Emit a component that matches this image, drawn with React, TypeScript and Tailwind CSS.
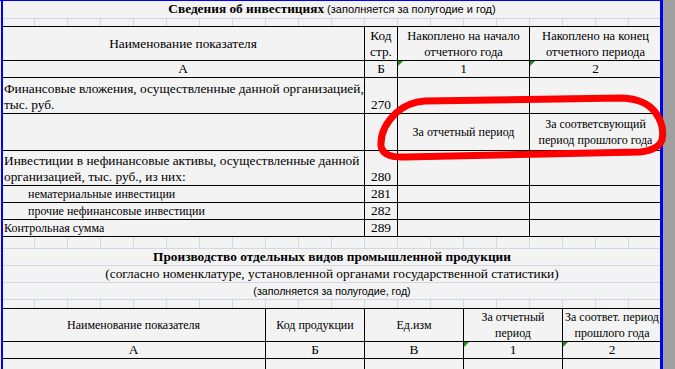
import React from "react";

const serif = "font-['Liberation_Serif',serif]";
const sans = "font-['Liberation_Sans',sans-serif]";

function GridRow({ h, bottom = false }: { h: string; bottom?: boolean }) {
  return (
    <div className={`flex ${h} ${bottom ? "border-b border-[#d0d7e5]" : ""}`}>
      {Array.from({ length: 20 }).map((_, i) => (
        <div key={i} className="w-[33px] shrink-0 border-r border-[#d0d7e5]" />
      ))}
    </div>
  );
}

function Tri() {
  return (
    <span className="absolute left-0 top-0 w-0 h-0 border-t-[5px] border-r-[5px] border-t-[#1a8a1a] border-r-transparent" />
  );
}

const c = "border-r border-b border-black flex";

export default function App() {
  return (
    <div className={`relative w-[675px] h-[369px] overflow-hidden bg-[#a0a0a0] flex ${serif} text-black`}>
      <div className="w-[663px] h-full shrink-0 bg-[#f3f3f3] pl-[2px]">
        <div className="w-[660px] flex flex-col">
          {/* Title row */}
          <div className="h-[19px] border-b border-[#d0d7e5] flex items-center justify-center leading-[16px]">
            <span className="text-[13.33px] font-bold">Сведения об инвестициях</span>
            <span className={`${sans} text-[11px] ml-[3px]`}>(заполняется за полугодие и год)</span>
          </div>
          <GridRow h="h-[7px]" />

          {/* Table 1 */}
          <div className="grid grid-cols-[363px_33px_132px_132px] border-t border-black text-[13.33px] leading-[16px]">
            <div className={`${c} h-[34px] items-center justify-center`}>Наименование показателя</div>
            <div className={`${c} items-center justify-center text-center`}>Код<br />стр.</div>
            <div className={`${c} items-center justify-center text-center text-[12.5px]`}>Накоплено на начало<br />отчетного года</div>
            <div className={`${c} items-center justify-center text-center text-[12.5px]`}>Накоплено на конец<br />отчетного периода</div>

            <div className={`${c} h-[17px] items-center justify-center`}>А</div>
            <div className={`${c} items-center justify-center`}>Б</div>
            <div className={`${c} relative items-center justify-center`}><Tri />1</div>
            <div className={`${c} relative items-center justify-center`}><Tri />2</div>

            <div className={`${c} h-[36px] items-end pl-[2px]`}>Финансовые вложения, осуществленные данной организацией,<br />тыс. руб.</div>
            <div className={`${c} items-end justify-center`}>270</div>
            <div className={c} />
            <div className={c} />

            <div className={`${c} h-[37px]`} />
            <div className={c} />
            <div className={`${c} items-center justify-center text-[12px]`}>За отчетный период</div>
            <div className={`${c} items-center justify-center text-center text-[12px]`}>За соответсвующий<br />период прошлого года</div>

            <div className={`${c} h-[35px] items-end pl-[2px]`}>Инвестиции в нефинансовые активы, осуществленные данной<br />организацией, тыс. руб., из них:</div>
            <div className={`${c} items-end justify-center`}>280</div>
            <div className={c} />
            <div className={c} />

            <div className={`${c} h-[17px] items-center pl-[26px] text-[12px]`}>нематериальные инвестиции</div>
            <div className={`${c} items-center justify-center`}>281</div>
            <div className={c} />
            <div className={c} />

            <div className={`${c} h-[17px] items-center pl-[26px] text-[12px]`}>прочие нефинансовые инвестиции</div>
            <div className={`${c} items-center justify-center`}>282</div>
            <div className={c} />
            <div className={c} />

            <div className={`${c} h-[17px] items-center pl-[2px] text-[12px]`}>Контрольная сумма</div>
            <div className={`${c} items-center justify-center`}>289</div>
            <div className={c} />
            <div className={c} />
          </div>

          <GridRow h="h-[12px]" bottom />
          <div className="h-[17px] border-b border-[#d0d7e5] flex items-center justify-center text-[13.33px] font-bold leading-[16px]">
            Производство отдельных видов промышленной продукции
          </div>
          <div className="h-[17px] border-b border-[#d0d7e5] flex items-center justify-center text-[13.33px] leading-[16px]">
            (согласно номенклатуре, установленной органами государственной статистики)
          </div>
          <div className={`h-[17px] border-b border-[#d0d7e5] flex items-center justify-center ${sans} text-[10.67px] leading-[16px]`}>
            (заполняется за полугодие, год)
          </div>
          <GridRow h="h-[8px]" />

          {/* Table 2 */}
          <div className="grid grid-cols-[264px_99px_99px_99px_99px] border-t border-black text-[12px] leading-[16px]">
            <div className={`${c} h-[33px] items-center justify-center`}>Наименование показателя</div>
            <div className={`${c} items-center justify-center`}>Код продукции</div>
            <div className={`${c} items-center justify-center`}>Ед.изм</div>
            <div className={`${c} items-center justify-center text-center`}>За отчетный<br />период</div>
            <div className={`${c} items-center justify-center text-center whitespace-nowrap`}>За соответ. период<br />прошлого года</div>

            <div className={`${c} h-[17px] items-center justify-center text-[13.33px]`}>А</div>
            <div className={`${c} items-center justify-center text-[13.33px]`}>Б</div>
            <div className={`${c} items-center justify-center text-[13.33px]`}>В</div>
            <div className={`${c} relative items-center justify-center text-[13.33px]`}><Tri />1</div>
            <div className={`${c} relative items-center justify-center text-[13.33px]`}><Tri />2</div>

            <div className={`${c} h-[17px]`} />
            <div className={c} />
            <div className={c} />
            <div className={c} />
            <div className={c} />
          </div>
        </div>
      </div>

      {/* page-break preview blue frame */}
      <div className="absolute left-0 top-0 w-[663px] h-px bg-[#0000ff]" />
      <div className="absolute left-[1px] top-0 w-[2px] h-full bg-[#0000ff]" />
      <div className="absolute left-[660px] top-0 w-[3px] h-full bg-[#0000ff]" />

      {/* red hand-drawn annotation */}
      <svg className="absolute left-0 top-0 pointer-events-none" width="675" height="369" viewBox="0 0 675 369">
        <path
          d="M 425 101 L 622 98 Q 645 99 655 112 Q 665 125 662 140 Q 658 150 640 152 L 405 157 Q 383 158 381 146 Q 380 128 396 113 Q 408 102 425 101 Z"
          fill="none"
          stroke="#ff0000"
          strokeWidth="7"
          strokeLinejoin="round"
        />
      </svg>
    </div>
  );
}
